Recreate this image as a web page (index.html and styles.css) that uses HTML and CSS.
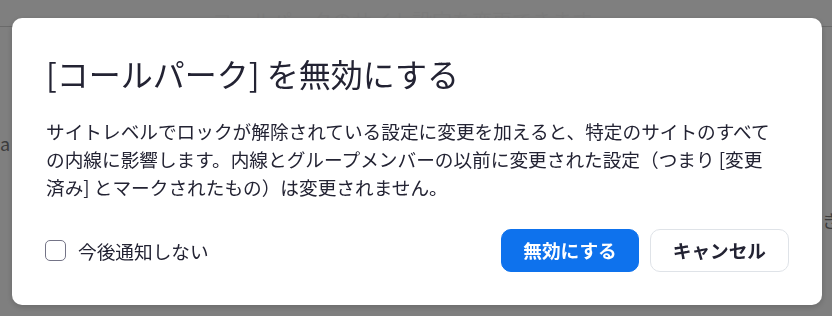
FILE: index.html
```html
<!DOCTYPE html>
<html lang="ja">
<head>
<meta charset="utf-8">
<title>コールパーク</title>
<link rel="stylesheet" href="styles.css">
</head>
<body>
<div class="page">
  <header class="page-header"><span class="page-heading">コールパークのサイト設定を変更できます</span></header>
  <div class="page-body">
    <div class="page-row page-row-left">a</div>
    <div class="page-row page-row-right">き</div>
  </div>
</div>
<div class="overlay">
  <div class="dialog" role="dialog" aria-modal="true">
    <h1 class="dialog-title">[コールパーク] を無効にする</h1>
    <p class="dialog-text">サイトレベルでロックが解除されている設定に変更を加えると、特定のサイトのすべての内線に影響します。内線とグループメンバーの以前に変更された設定（つまり [変更済み] とマークされたもの）は変更されません。</p>
    <div class="dialog-footer">
      <label class="check">
        <span class="check-box"></span>
        <span class="check-label">今後通知しない</span>
      </label>
      <div class="actions">
        <button class="btn btn-primary" type="button">無効にする</button>
        <button class="btn btn-secondary" type="button">キャンセル</button>
      </div>
    </div>
  </div>
</div>
</body>
</html>
```

FILE: styles.css
```css
html, body {
  margin: 0;
  padding: 0;
}

body {
  width: 832px;
  height: 316px;
  overflow: hidden;
  font-family: "Noto Sans CJK JP", "Noto Sans", sans-serif;
  background: #ffffff;
}

.page {
  height: 316px;
  background: #ffffff;
}

.page-header {
  height: 26px;
  border-bottom: 1px solid #d4d4d4;
  padding-left: 212px;
  box-sizing: content-box;
}

.page-heading {
  display: block;
  padding-top: 9px;
  font-size: 20px;
  line-height: 24px;
  color: #f7f7f7;
}

.page-body {
  display: flex;
  justify-content: space-between;
  align-items: flex-start;
}

.page-row {
  font-size: 18px;
  line-height: 24px;
  color: #7a7a7a;
}

.page-row-left {
  margin-top: 104px;
  margin-left: 0;
}

.page-row-right {
  margin-top: 181px;
  margin-right: -8px;
}

.overlay {
  position: fixed;
  inset: 0;
  background: rgba(0, 0, 0, 0.5);
  display: flex;
  align-items: flex-start;
  padding: 18px 10px 0 12px;
  box-sizing: border-box;
}

.dialog {
  width: 810px;
  height: 287px;
  box-sizing: border-box;
  background: #ffffff;
  border-radius: 10px;
  padding: 33px;
  box-shadow: 0 2px 6px rgba(0, 0, 0, 0.18);
  display: flex;
  flex-direction: column;
}

.dialog-title {
  margin: 0;
  font-size: 32px;
  font-weight: 400;
  line-height: 44px;
  color: #232333;
  padding-left: 1px;
}

.dialog-text {
  margin: 22px 0 0;
  padding-left: 1px;
  max-width: 735px;
  font-size: 18.67px;
  line-height: 28px;
  color: #232333;
}

.dialog-footer {
  margin-top: auto;
  display: flex;
  align-items: center;
  justify-content: space-between;
}

.check {
  display: flex;
  align-items: center;
  gap: 12px;
  cursor: pointer;
}

.check-box {
  width: 21px;
  height: 21px;
  box-sizing: border-box;
  border: 1px solid #747487;
  border-radius: 5px;
  background: #ffffff;
}

.check-label {
  font-size: 18.67px;
  line-height: 28px;
  color: #232333;
}

.actions {
  display: flex;
  gap: 11px;
}

.btn {
  height: 43px;
  padding: 0 21px;
  border-radius: 10px;
  font-family: "Noto Sans CJK JP", "Noto Sans", sans-serif;
  font-size: 18.67px;
  font-weight: 700;
  line-height: 1;
  cursor: pointer;
}

.btn-primary {
  background: #0e72ed;
  border: 1px solid #0e72ed;
  color: #ffffff;
}

.btn-secondary {
  padding: 0 22px;
  background: #ffffff;
  border: 1px solid #dfe3e8;
  color: #232333;
}
```
